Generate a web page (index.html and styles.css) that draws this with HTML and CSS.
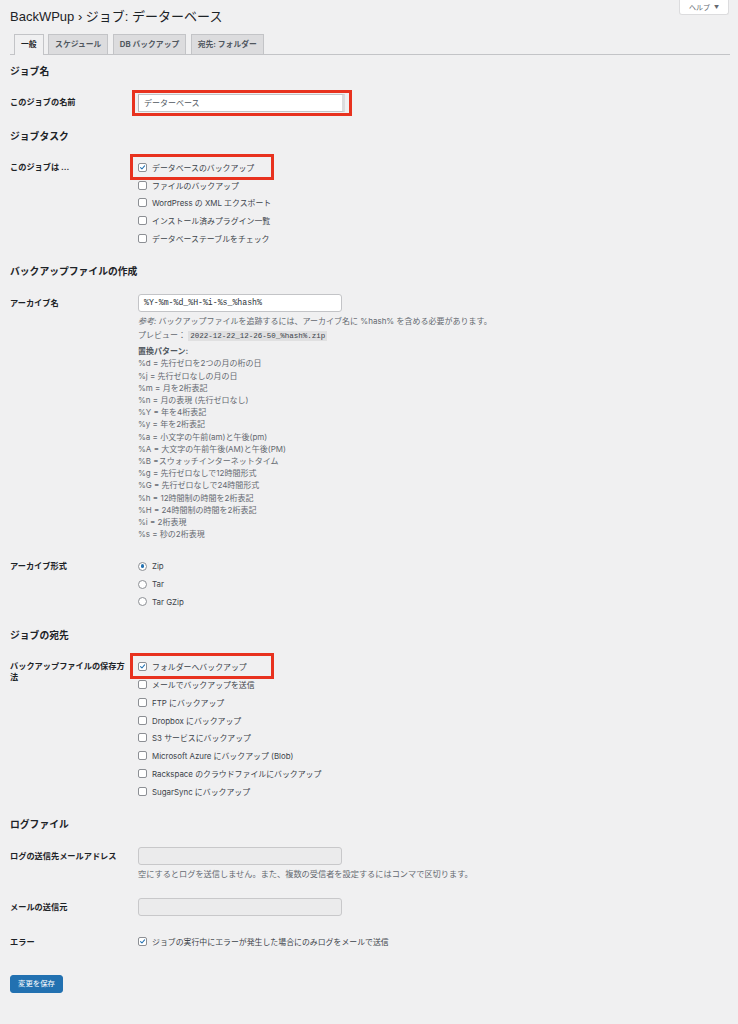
FILE: index.html
```html
<!DOCTYPE html>
<html lang="ja">
<head>
<meta charset="utf-8">
<title>BackWPup › ジョブ: データーベース</title>
<link rel="stylesheet" href="styles.css">
</head>
<body>
<div class="wrap">
  <button class="help-tab" type="button">ヘルプ <span class="caret">▼</span></button>
  <h1 class="page-title">BackWPup › ジョブ: データーベース</h1>
  <nav class="tabs">
    <span class="tab active">一般</span>
    <span class="tab">スケジュール</span>
    <span class="tab">DB バックアップ</span>
    <span class="tab">宛先: フォルダー</span>
  </nav>

  <h2 class="section-title">ジョブ名</h2>
  <div class="form-table">
    <div class="row">
      <div class="th">このジョブの名前</div>
      <div class="td">
        <div class="field">
          <div class="input input-name">データーベース</div>
          <span class="annot annot-name"></span>
        </div>
      </div>
    </div>
  </div>

  <h2 class="section-title">ジョブタスク</h2>
  <div class="form-table">
    <div class="row">
      <div class="th">このジョブは ...</div>
      <div class="td">
        <div class="choice marked"><span class="cb on"><svg viewBox="0 0 10 10"><path d="M2.2 5.1 L4.2 7.1 L8 2.6"/></svg></span>データベースのバックアップ<span class="annot annot-choice"></span></div>
        <div class="choice"><span class="cb"></span>ファイルのバックアップ</div>
        <div class="choice"><span class="cb"></span>WordPress の XML エクスポート</div>
        <div class="choice"><span class="cb"></span>インストール済みプラグイン一覧</div>
        <div class="choice"><span class="cb"></span>データベーステーブルをチェック</div>
      </div>
    </div>
  </div>

  <h2 class="section-title">バックアップファイルの作成</h2>
  <div class="form-table">
    <div class="row">
      <div class="th">アーカイブ名</div>
      <div class="td">
        <div class="input input-mono">%Y-%m-%d_%H-%i-%s_%hash%</div>
        <p class="desc"><span class="em">参考:</span> バックアップファイルを追跡するには、アーカイブ名に %hash% を含める必要があります。</p>
        <p class="desc">プレビュー： <code class="code">2022-12-22_12-26-50_%hash%.zip</code></p>
        <div class="patterns">
          <div class="pattern-title">置換パターン:</div>
          <div>%d = 先行ゼロを2つの月の桁の日</div>
          <div>%j = 先行ゼロなしの月の日</div>
          <div>%m = 月を2桁表記</div>
          <div>%n = 月の表現 (先行ゼロなし)</div>
          <div>%Y = 年を4桁表記</div>
          <div>%y = 年を2桁表記</div>
          <div>%a = 小文字の午前(am)と午後(pm)</div>
          <div>%A = 大文字の午前午後(AM)と午後(PM)</div>
          <div>%B =スウォッチインターネットタイム</div>
          <div>%g = 先行ゼロなしで12時間形式</div>
          <div>%G = 先行ゼロなしで24時間形式</div>
          <div>%h = 12時間制の時間を2桁表記</div>
          <div>%H = 24時間制の時間を2桁表記</div>
          <div>%i = 2桁表現</div>
          <div>%s = 秒の2桁表現</div>
        </div>
      </div>
    </div>
    <div class="row">
      <div class="th">アーカイブ形式</div>
      <div class="td">
        <div class="choice"><span class="rb on"></span>Zip</div>
        <div class="choice"><span class="rb"></span>Tar</div>
        <div class="choice"><span class="rb"></span>Tar GZip</div>
      </div>
    </div>
  </div>

  <h2 class="section-title">ジョブの宛先</h2>
  <div class="form-table">
    <div class="row">
      <div class="th">バックアップファイルの保存方法</div>
      <div class="td">
        <div class="choice marked"><span class="cb on"><svg viewBox="0 0 10 10"><path d="M2.2 5.1 L4.2 7.1 L8 2.6"/></svg></span>フォルダーへバックアップ<span class="annot annot-choice"></span></div>
        <div class="choice"><span class="cb"></span>メールでバックアップを送信</div>
        <div class="choice"><span class="cb"></span>FTP にバックアップ</div>
        <div class="choice"><span class="cb"></span>Dropbox にバックアップ</div>
        <div class="choice"><span class="cb"></span>S3 サービスにバックアップ</div>
        <div class="choice"><span class="cb"></span>Microsoft Azure にバックアップ (Blob)</div>
        <div class="choice"><span class="cb"></span>Rackspace のクラウドファイルにバックアップ</div>
        <div class="choice"><span class="cb"></span>SugarSync にバックアップ</div>
      </div>
    </div>
  </div>

  <h2 class="section-title">ログファイル</h2>
  <div class="form-table">
    <div class="row">
      <div class="th">ログの送信先メールアドレス</div>
      <div class="td">
        <div class="input input-disabled"></div>
        <p class="desc desc-log">空にするとログを送信しません。また、複数の受信者を設定するにはコンマで区切ります。</p>
      </div>
    </div>
    <div class="row">
      <div class="th">メールの送信元</div>
      <div class="td">
        <div class="input input-disabled"></div>
      </div>
    </div>
    <div class="row">
      <div class="th">エラー</div>
      <div class="td">
        <div class="choice"><span class="cb on"><svg viewBox="0 0 10 10"><path d="M2.2 5.1 L4.2 7.1 L8 2.6"/></svg></span>ジョブの実行中にエラーが発生した場合にのみログをメールで送信</div>
      </div>
    </div>
  </div>

  <div class="submit">
    <button class="button-primary" type="button">変更を保存</button>
  </div>
</div>
</body>
</html>
```

FILE: styles.css
```css
* {
  box-sizing: border-box;
}

html,
body {
  margin: 0;
  padding: 0;
}

body {
  background: #f0f0f1;
  color: #1d2327;
  font-family: "Inter", "Noto Sans CJK JP", sans-serif;
  font-size: 8px;
}

.wrap {
  position: relative;
  margin: 0 8px 0 10px;
  padding-bottom: 31px;
}

/* help tab hanging from the top edge */
.help-tab {
  position: absolute;
  top: 0;
  right: 1px;
  width: 50px;
  height: 15px;
  padding: 0;
  background: #fff;
  border: 1px solid #dcdcde;
  border-top: 0;
  border-radius: 0 0 3px 3px;
  color: #646970;
  font-family: "Inter", "Noto Sans CJK JP", sans-serif;
  font-size: 7px;
  line-height: 14px;
}

.caret {
  font-size: 5px;
  margin-left: 2px;
  vertical-align: 1px;
}

.page-title {
  margin: 0;
  padding-top: 10px;
  font-family: "Liberation Sans", "Noto Sans CJK JP", sans-serif;
  font-size: 13px;
  line-height: 14px;
  font-weight: 400;
  color: #1d2327;
}

/* tabs */
.tabs {
  display: flex;
  align-items: flex-end;
  gap: 4.5px;
  margin-top: 10px;
  padding-left: 4px;
  height: 21px;
  border-bottom: 1px solid #c3c4c7;
}

.tab {
  height: 20px;
  padding: 0 6px;
  border: 1px solid #c3c4c7;
  border-bottom: 0;
  background: #dcdcde;
  color: #50575e;
  font-size: 7.8px;
  font-weight: 700;
  line-height: 19px;
  white-space: nowrap;
}

.tab.active {
  height: 21px;
  margin-bottom: -1px;
  background: #f0f0f1;
  color: #1d2327;
}

/* sections */
.section-title {
  margin: 10.5px 0 7.5px;
  font-size: 9.8px;
  line-height: 12px;
  font-weight: 700;
  color: #1d2327;
}

.row {
  display: grid;
  grid-template-columns: 128px 1fr;
  padding: 8.5px 0;
}

.th {
  padding: 3.5px 6px 0 0;
  font-size: 8.2px;
  line-height: 11px;
  font-weight: 700;
  color: #1d2327;
}

.td {
  min-width: 0;
}

.field {
  position: relative;
  display: inline-block;
  vertical-align: top;
}

.input {
  width: 204px;
  height: 18px;
  padding: 0 5px;
  background: #fff;
  border: 1px solid #c3c4c7;
  border-radius: 3px;
  color: #2c3338;
  font-size: 8px;
  line-height: 16px;
  white-space: nowrap;
}

.input-name {
  width: 207px;
  border-left-color: #b5b6b9;
  border-right: 3px solid #dcdcde;
  border-radius: 0;
  color: #50575e;
}

.input-mono {
  font-family: "Liberation Mono", "Noto Sans CJK JP", monospace;
  font-size: 8.2px;
  color: #2c3338;
}

.input-disabled {
  background: #ebebec;
  border-color: #c8c8ca;
}

/* red annotation frames drawn over the content */
.annot {
  position: absolute;
  border: 3px solid #e8321f;
  pointer-events: none;
}

.annot-name {
  left: -6px;
  right: -7px;
  top: -4px;
  bottom: -4px;
}

.annot-choice {
  left: -8px;
  top: -5px;
  width: 144px;
  height: 26px;
}

/* checkbox and radio lists */
.choice {
  position: relative;
  display: flex;
  align-items: center;
  gap: 5px;
  height: 17.8px;
  color: #3c434a;
  font-size: 7.9px;
  white-space: nowrap;
}

.cb {
  flex: none;
  display: flex;
  width: 9px;
  height: 9px;
  background: #fff;
  border: 1px solid #8c8f94;
  border-radius: 2px;
}

.cb svg {
  width: 100%;
  height: 100%;
}

.cb path {
  fill: none;
  stroke: #2271b1;
  stroke-width: 1.5;
  stroke-linecap: round;
  stroke-linejoin: round;
}

.rb {
  flex: none;
  display: flex;
  align-items: center;
  justify-content: center;
  width: 9px;
  height: 9px;
  background: #fff;
  border: 1px solid #8c8f94;
  border-radius: 50%;
}

.rb.on::after {
  content: "";
  width: 3.5px;
  height: 3.5px;
  border-radius: 50%;
  background: #2271b1;
}

/* descriptions */
.desc {
  margin: 1.5px 0 0;
  color: #646970;
  font-size: 8px;
  line-height: 14.4px;
  white-space: nowrap;
}

.desc + .desc {
  margin-top: 0;
}

.desc-log {
  font-size: 8.2px;
}

.em {
  font-style: italic;
}

.code {
  padding: 1px 2px;
  background: #e0e0e1;
  color: #3c434a;
  font-family: "Liberation Mono", monospace;
  font-size: 7.5px;
}

.patterns {
  margin-top: 1.3px;
  color: #646970;
  font-size: 8px;
  line-height: 12.2px;
  white-space: nowrap;
}

.pattern-title {
  font-weight: 700;
  color: #50575e;
}

/* submit */
.submit {
  margin-top: 15.5px;
}

.button-primary {
  height: 18px;
  padding: 0 7px;
  background: #2271b1;
  border: 1px solid #2271b1;
  border-radius: 3px;
  color: #fff;
  font-family: "Inter", "Noto Sans CJK JP", sans-serif;
  font-size: 7.4px;
  line-height: 16px;
}
```
